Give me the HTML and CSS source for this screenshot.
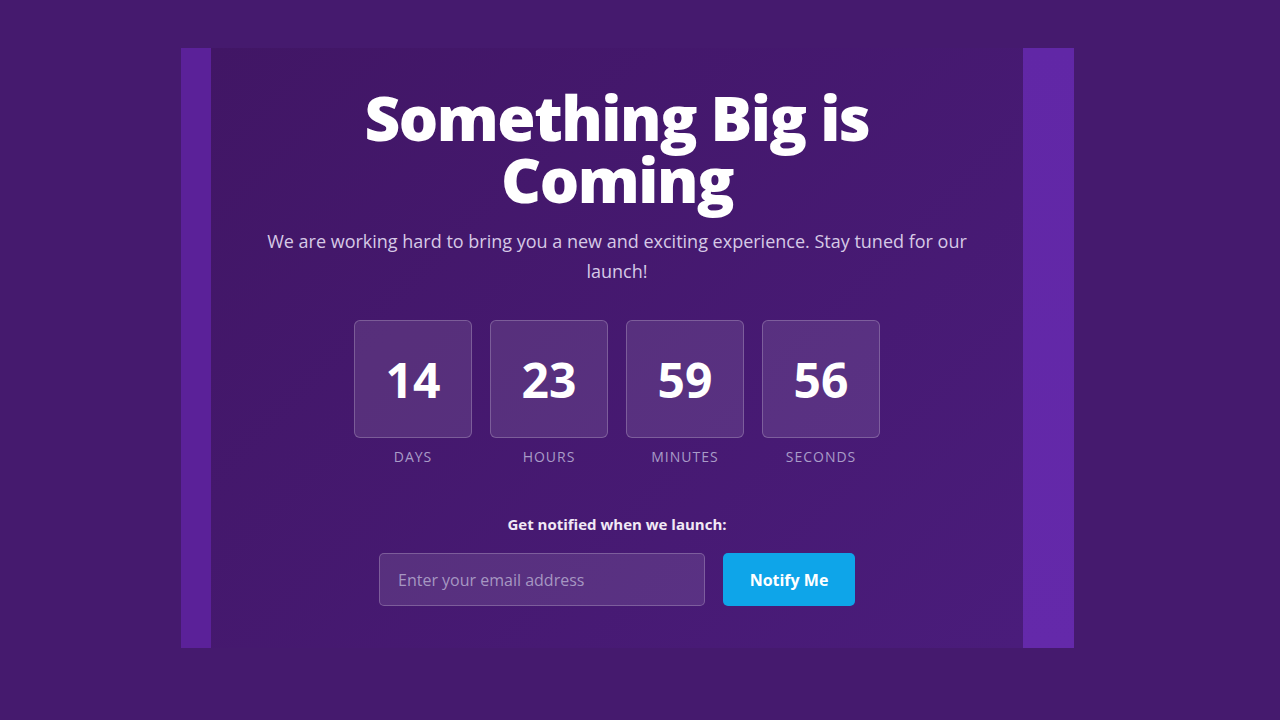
FILE: index.html
```html
<!DOCTYPE html>
<html lang="en">
<head>
<meta charset="utf-8">
<title>Coming Soon</title>
<link rel="stylesheet" href="styles.css">
</head>
<body>
<div class="page">
  <div class="frame">
    <div class="stripe stripe-left"></div>
    <main class="panel">
      <h1 class="title">Something Big is<br>Coming</h1>
      <p class="lead">We are working hard to bring you a new and exciting experience. Stay tuned for our launch!</p>
      <div class="timer">
        <div class="unit"><div class="box">14</div><div class="label">Days</div></div>
        <div class="unit"><div class="box">23</div><div class="label">Hours</div></div>
        <div class="unit"><div class="box">59</div><div class="label">Minutes</div></div>
        <div class="unit"><div class="box">56</div><div class="label">Seconds</div></div>
      </div>
      <p class="notify-text">Get notified when we launch:</p>
      <form class="form">
        <input class="email" type="email" placeholder="Enter your email address">
        <button class="btn" type="button">Notify Me</button>
      </form>
    </main>
    <div class="stripe stripe-right"></div>
  </div>
</div>
</body>
</html>
```

FILE: styles.css
```css
* { box-sizing: border-box; }
html, body { margin: 0; padding: 0; }
body {
  background: #451a6e;
  font-family: "Open Sans", "Noto Sans", sans-serif;
  color: #fff;
  width: 1280px;
  height: 720px;
  overflow: hidden;
}
.page {
  padding-top: 48px;
  padding-left: 181px;
}
.frame {
  display: flex;
  width: 893px;
  height: 600px;
}
.stripe-left {
  width: 30px;
  background: #5b2199;
}
.stripe-right {
  width: 51px;
  background: linear-gradient(180deg, #6127a6, #6429aa);
}
.panel {
  flex: 1;
  background: linear-gradient(135deg, #411665 0%, #4a1c7b 100%);
  display: flex;
  flex-direction: column;
  align-items: center;
  padding-top: 38px;
}
.title {
  margin: 0;
  font-size: 62px;
  font-weight: 800;
  line-height: 62px;
  text-align: center;
  letter-spacing: -1.5px;
}
.lead {
  margin: 16px 0 0;
  width: 720px;
  font-size: 18px;
  line-height: 30px;
  text-align: center;
  color: #d6c9e6;
}
.timer {
  display: flex;
  gap: 18px;
  margin-top: 34px;
}
.unit {
  display: flex;
  flex-direction: column;
  align-items: center;
}
.box {
  width: 118px;
  height: 118px;
  border: 1px solid rgba(255,255,255,0.22);
  border-radius: 6px;
  background: rgba(255,255,255,0.1);
  display: flex;
  align-items: center;
  justify-content: center;
  font-size: 48px;
  font-weight: 700;
}
.label {
  margin-top: 9px;
  font-size: 14px;
  line-height: 20px;
  letter-spacing: 1px;
  text-transform: uppercase;
  color: #a99cc8;
}
.notify-text {
  margin: 47px 0 0;
  font-size: 15px;
  line-height: 20px;
  font-weight: 700;
  color: #f1e9f6;
}
.form {
  display: flex;
  gap: 18px;
  margin-top: 19px;
}
.email {
  width: 326px;
  height: 53px;
  border: 1px solid rgba(255,255,255,0.22);
  border-radius: 5px;
  background: rgba(255,255,255,0.1);
  padding: 0 18px;
  font-family: inherit;
  font-size: 16px;
  color: #fff;
  outline: none;
}
.email::placeholder { color: #a697c2; }
.btn {
  width: 132px;
  height: 53px;
  border: 0;
  border-radius: 5px;
  background: #0ea5e9;
  color: #fff;
  font-family: inherit;
  font-size: 16px;
  font-weight: 700;
}
```
